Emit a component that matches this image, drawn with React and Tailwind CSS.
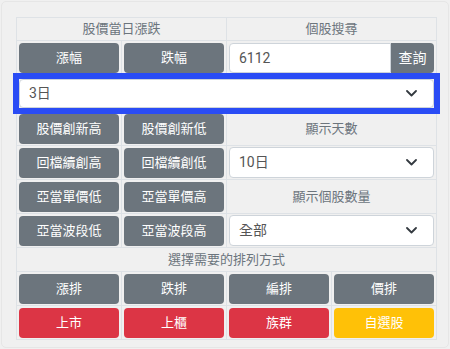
import React from "react";

const FONT = { fontFamily: 'Roboto, "Noto Sans CJK TC", "Noto Sans", sans-serif' };

function Btn({ children, tone = "gray" }) {
  const bg =
    tone === "red" ? "bg-[#dc3545]" : tone === "yellow" ? "bg-[#ffc107]" : "bg-[#6c757d]";
  return (
    <div className={`h-[30px] rounded-[4px] ${bg} text-white text-[13px] flex items-center justify-center`}>
      {children}
    </div>
  );
}

function BtnCell({ children, tone }) {
  return (
    <div className="w-[105px] border-r border-[#dee2e6] pt-[2px] pb-[1px] px-[2px]">
      <Btn tone={tone}>{children}</Btn>
    </div>
  );
}

function Chevron() {
  return (
    <svg width="11" height="7" viewBox="0 0 11 7" className="mr-[16px] shrink-0">
      <path d="M1 1l4.5 4.5L10 1" fill="none" stroke="#343a40" strokeWidth="1.8" strokeLinecap="round" strokeLinejoin="round" />
    </svg>
  );
}

function Select({ value, h = "h-[31px]" }) {
  return (
    <div
      className={`${h} rounded-[4px] border border-[#ced4da] bg-white flex items-center justify-between text-[14px] text-[#555]`}
    >
      <span className="pl-[9px]">{value}</span>
      <Chevron />
    </div>
  );
}

function Row({ children }) {
  return <div className="flex border-b border-[#dee2e6]">{children}</div>;
}

function TextCell({ children, w }) {
  return (
    <div className={`${w} border-r border-[#dee2e6] h-[22px] flex items-center justify-center text-[13px] text-[#6c757d]`}>
      {children}
    </div>
  );
}

export default function App() {
  return (
    <div className="w-[450px] h-[349px] bg-[#f0f0f0] p-[1px]" style={FONT}>
      <div className="h-[347px] rounded-[5px] border border-[#e6e6e6] pt-[15px] pl-[14px]">
        <div className="w-[421px] border-l border-t border-[#dee2e6]">
          <Row>
            <TextCell w="w-[210px]">股價當日漲跌</TextCell>
            <TextCell w="w-[210px]">個股搜尋</TextCell>
          </Row>
          <Row>
            <BtnCell>漲幅</BtnCell>
            <BtnCell>跌幅</BtnCell>
            <div className="w-[210px] border-r border-[#dee2e6] pt-[2px] pb-[1px] px-[2px] flex">
              <div className="flex-1 h-[30px] rounded-l-[4px] border border-[#ced4da] bg-white flex items-center pl-[9px] text-[14px] text-[#555]">
                6112
              </div>
              <div className="w-[43px] h-[30px] rounded-r-[4px] bg-[#6c757d] text-white text-[14px] flex items-center justify-center">
                查詢
              </div>
            </div>
          </Row>
          <Row>
            <div className="w-[420px] border-r border-[#dee2e6] pt-[4px] pb-[3px] px-[2px]">
              <div className="relative z-10 -m-[6px] border-[6px] border-[#2a4cf5]">
                <Select value="3日" h="h-[29px]" />
              </div>
            </div>
          </Row>
          <Row>
            <BtnCell>股價創新高</BtnCell>
            <BtnCell>股價創新低</BtnCell>
            <div className="w-[210px] border-r border-[#dee2e6] h-[33px] flex items-center justify-center text-[13px] text-[#6c757d]">
              顯示天數
            </div>
          </Row>
          <Row>
            <BtnCell>回檔續創高</BtnCell>
            <BtnCell>回檔續創低</BtnCell>
            <div className="w-[210px] border-r border-[#dee2e6] pt-[1px] pb-[1px] px-[2px]">
              <Select value="10日" />
            </div>
          </Row>
          <Row>
            <BtnCell>亞當單價低</BtnCell>
            <BtnCell>亞當單價高</BtnCell>
            <div className="w-[210px] border-r border-[#dee2e6] h-[33px] flex items-center justify-center text-[13px] text-[#6c757d]">
              顯示個股數量
            </div>
          </Row>
          <Row>
            <BtnCell>亞當波段低</BtnCell>
            <BtnCell>亞當波段高</BtnCell>
            <div className="w-[210px] border-r border-[#dee2e6] pt-[1px] pb-[1px] px-[2px]">
              <Select value="全部" />
            </div>
          </Row>
          <Row>
            <div className="w-[420px] border-r border-[#dee2e6] h-[23px] flex items-center justify-center text-[13px] text-[#6c757d]">
              選擇需要的排列方式
            </div>
          </Row>
          <Row>
            <BtnCell>漲排</BtnCell>
            <BtnCell>跌排</BtnCell>
            <BtnCell>編排</BtnCell>
            <BtnCell>價排</BtnCell>
          </Row>
          <Row>
            <BtnCell tone="red">上市</BtnCell>
            <BtnCell tone="red">上櫃</BtnCell>
            <BtnCell tone="red">族群</BtnCell>
            <BtnCell tone="yellow">自選股</BtnCell>
          </Row>
        </div>
      </div>
    </div>
  );
}
